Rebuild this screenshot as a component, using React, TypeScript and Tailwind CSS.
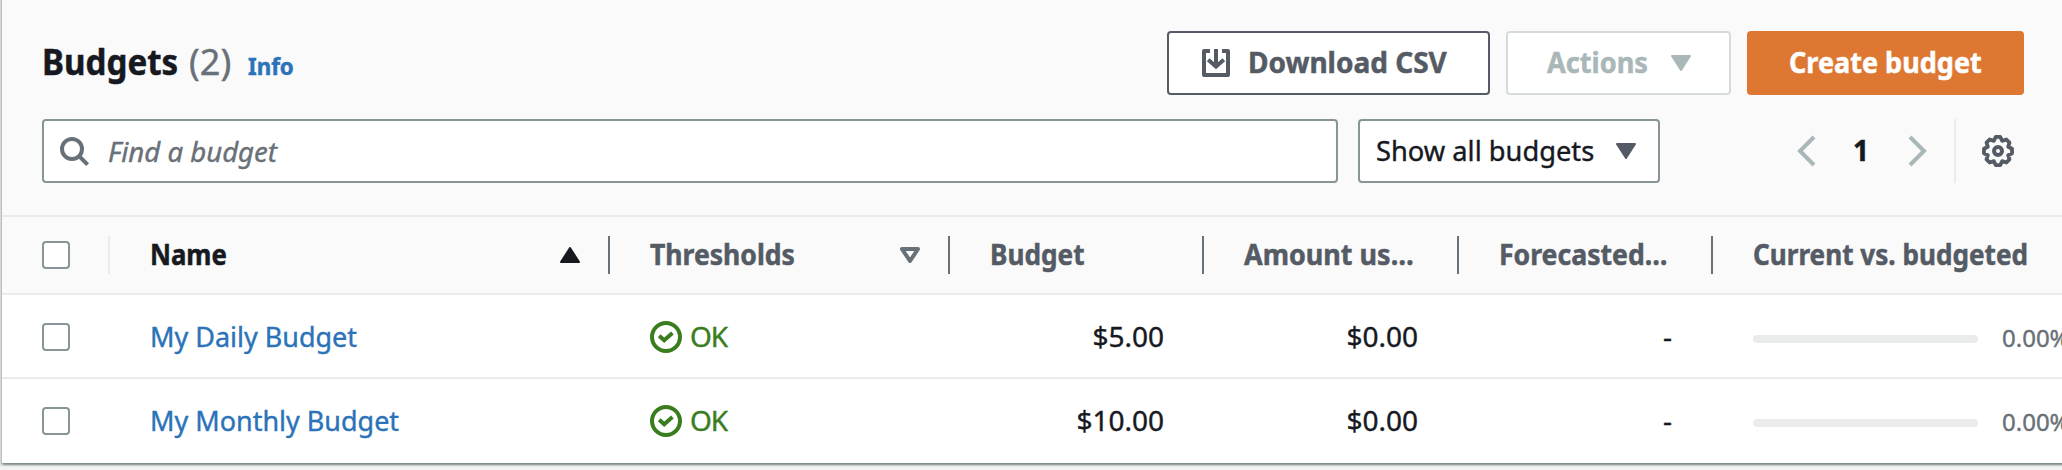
import React from "react";

const DIVIDER = "h-[38px] w-[2px] shrink-0";
const REGULAR = "[-webkit-text-stroke:0.4px_currentColor]";
const BOLD = "font-bold [-webkit-text-stroke:0.5px_currentColor]";

/* A single line of text, narrowed horizontally by the scale class it is given. */
function Text({ className = "", children }: { className?: string; children: React.ReactNode }) {
  return <span className={"block pb-[2px] " + className}>{children}</span>;
}

function Caret({ className = "" }: { className?: string }) {
  return (
    <svg className={"shrink-0 " + className} width="20" height="16" viewBox="0 0 20 16" fill="currentColor" stroke="currentColor" strokeWidth="2" strokeLinejoin="round">
      <path d="M1 1h18l-9 14z" />
    </svg>
  );
}

const GEAR_POINTS = Array.from({ length: 8 }, (_, tooth) =>
  [
    { turn: -9, radius: 14.2 },
    { turn: 9, radius: 14.2 },
    { turn: 22.5, radius: 11 },
  ]
    .map(({ turn, radius }) => {
      const angle = ((tooth * 45 + turn) * Math.PI) / 180;
      return `${(16 + radius * Math.sin(angle)).toFixed(2)},${(16 - radius * Math.cos(angle)).toFixed(2)}`;
    })
    .join(" "),
).join(" ");

function Gear() {
  return (
    <svg className="mr-[10px] text-[#545b64]" width="32" height="32" viewBox="0 0 32 32" fill="none" stroke="currentColor" strokeWidth="4" strokeLinejoin="round">
      <circle cx="16" cy="16" r="4" />
      <polygon points={GEAR_POINTS} strokeWidth="3.8" />
    </svg>
  );
}

function Checkbox() {
  return <span className="block size-[28px] shrink-0 rounded-[4px] border-2 border-[#879596] bg-white" />;
}

function StatusOk() {
  return (
    <div className="flex items-center text-[#3a7d1e]">
      <svg className="mr-[8px]" width="32" height="32" viewBox="0 0 32 32" fill="none" stroke="currentColor" strokeWidth="4">
        <circle cx="16" cy="16" r="14" />
        <path d="M9.2 14.8l5 4.5 8.2-7.2" />
      </svg>
      <Text className="tracking-[-1px]">OK</Text>
    </div>
  );
}

const ROWS = [
  { name: "My Daily Budget", budget: "$5.00", used: "$0.00", forecast: "-", percent: "0.00%", line: "border-b-2 border-[#ebebeb] pt-[2px]" },
  { name: "My Monthly Budget", budget: "$10.00", used: "$0.00", forecast: "-", percent: "0.00%", line: "" },
];

export default function App() {
  return (
    <div className="h-[470px] w-[2062px] overflow-hidden bg-[#f2f3f3] pl-[2px] font-['Noto_Sans','Open_Sans',sans-serif] text-[28px] leading-[44px] whitespace-nowrap text-[#16191f]">
      <section className="-mt-[10px] h-[473px] w-[2080px] bg-white shadow-[0_2px_2px_0_rgba(0,28,36,0.3),2px_2px_2px_0_rgba(0,28,36,0.15),-2px_2px_2px_0_rgba(0,28,36,0.15)]">
        <header className="h-[227px] border-b-2 border-[#ebebeb] bg-[#fafafa] pt-[41px] pl-[40px]">
          <div className="flex h-[64px] w-[1982px] items-center">
            <h2 className={"w-[147px] origin-left scale-x-[0.92] pb-[2px] text-[36px] " + BOLD}>Budgets</h2>
            <span className={"w-[45px] pb-[2px] text-[36px] text-[#687078] " + REGULAR}>(2)</span>
            <a className={"mt-[5px] ml-[14px] origin-left scale-x-[0.93] text-[24px] text-[#2b72b8] " + BOLD}>Info</a>
            <div className={"ml-auto flex gap-[16px] " + BOLD}>
              <button className="flex h-[64px] w-[323px] items-center rounded-[4px] border-2 border-[#545b64] bg-white pl-[33px] text-[#545b64]">
                <svg className="mr-[18px]" width="28" height="28" viewBox="0 0 28 28" fill="none" stroke="currentColor" strokeWidth="4">
                  <path d="M8 2H2v24h24V2h-6" strokeLinejoin="round" />
                  <path d="M14 0v17M6.2 10.7l7.8 6.8 7.8-6.8" />
                </svg>
                <Text>Download CSV</Text>
              </button>
              <button className="flex h-[64px] w-[225px] items-center rounded-[4px] border-2 border-[#d5dbdb] bg-white pl-[39px] text-[#aab7b8]">
                <Text className="origin-left scale-x-[0.97]">Actions</Text>
                <Caret className="mr-[38px] ml-auto" />
              </button>
              <button className="flex h-[64px] w-[277px] items-center rounded-[4px] bg-[#dd7732] pl-[42px] text-white">
                <Text className="origin-left scale-x-[0.965]">Create budget</Text>
              </button>
            </div>
          </div>
          <div className="mt-[24px] flex h-[64px] w-[1982px] items-center">
            <div className="flex h-[64px] w-[1296px] items-center rounded-[4px] border-2 border-[#879596] bg-white pl-[16px] text-[#687078]">
              <svg className="mr-[18px]" width="30" height="30" viewBox="0 0 30 30" fill="none" stroke="currentColor" strokeWidth="4">
                <circle cx="12" cy="13" r="10" />
                <path d="M19 20l8.6 8.6" />
              </svg>
              <span className={"origin-left scale-x-[0.985] italic " + REGULAR}>Find a budget</span>
            </div>
            <div className="ml-[20px] flex h-[64px] w-[302px] items-center rounded-[4px] border-2 border-[#879596] bg-white pl-[16px]">
              <Text className={"origin-left scale-x-[0.974] " + REGULAR}>Show all budgets</Text>
              <Caret className="mr-[22px] ml-auto text-[#545b64]" />
            </div>
            <div className="ml-auto flex h-[64px] items-center">
              <svg className="text-[#aab7b8]" width="20" height="32" viewBox="0 0 20 32" fill="none" stroke="currentColor" strokeWidth="4">
                <path d="M17 2L3 16l14 14" />
              </svg>
              <Text className={"w-[90px] pr-[2px] text-center " + BOLD}>1</Text>
              <svg className="text-[#aab7b8]" width="20" height="32" viewBox="0 0 20 32" fill="none" stroke="currentColor" strokeWidth="4">
                <path d="M3 2l14 14L3 30" />
              </svg>
              <span className="mr-[26px] ml-[27px] h-[64px] w-[2px] bg-[#ebebeb]" />
              <Gear />
            </div>
          </div>
        </header>

        <div className={"flex h-[78px] items-center border-b-2 border-[#ebebeb] bg-[#fafafa] pl-[40px] text-[#545b64] " + BOLD}>
          <Checkbox />
          <span className={DIVIDER + " ml-[38px] bg-[#ebebeb]"} />
          <div className="flex w-[498px] items-center pl-[40px] text-[#16191f]">
            <Text className="origin-left scale-x-[0.92]">Name</Text>
            <Caret className="mr-[28px] ml-auto rotate-180" />
          </div>
          <span className={DIVIDER + " bg-[#687078]"} />
          <div className="flex w-[338px] items-center pl-[40px]">
            <Text className="origin-left scale-x-[0.948]">Thresholds</Text>
            <svg className="mr-[28px] ml-auto text-[#687078]" width="20" height="16" viewBox="0 0 20 16" fill="none" stroke="currentColor" strokeWidth="4" strokeLinejoin="round">
              <path d="M2 2h16l-8 12z" />
            </svg>
          </div>
          <span className={DIVIDER + " bg-[#687078]"} />
          <div className="w-[252px] pl-[40px]"><Text className="origin-left scale-x-[0.935]">Budget</Text></div>
          <span className={DIVIDER + " bg-[#687078]"} />
          <div className="w-[253px] pl-[40px]"><Text className="origin-left scale-x-[0.963]">Amount us…</Text></div>
          <span className={DIVIDER + " bg-[#687078]"} />
          <div className="w-[252px] pl-[40px]"><Text className="origin-left scale-x-[0.95]">Forecasted…</Text></div>
          <span className={DIVIDER + " bg-[#687078]"} />
          <div className="pl-[40px]"><Text className="origin-left scale-x-[0.933]">Current vs. budgeted</Text></div>
        </div>

        {ROWS.map((row) => (
          <div key={row.name} className={"flex h-[84px] items-center pl-[40px] " + REGULAR + " " + row.line}>
            <Checkbox />
            <a className="ml-[80px] w-[500px] text-[#2b72b8]">
              <Text className="origin-left scale-x-[0.963]">{row.name}</Text>
            </a>
            <div className="w-[298px]"><StatusOk /></div>
            <Text className="w-[216px] text-right">{row.budget}</Text>
            <Text className="w-[254px] text-right">{row.used}</Text>
            <Text className="w-[254px] text-right">{row.forecast}</Text>
            <span className="mt-[4px] ml-[81px] h-[8px] w-[225px] shrink-0 rounded-[4px] bg-[#eaeceb]" />
            <span className="ml-[24px] pt-[1px] text-[24px] text-[#687078]">{row.percent}</span>
          </div>
        ))}
      </section>
    </div>
  );
}
